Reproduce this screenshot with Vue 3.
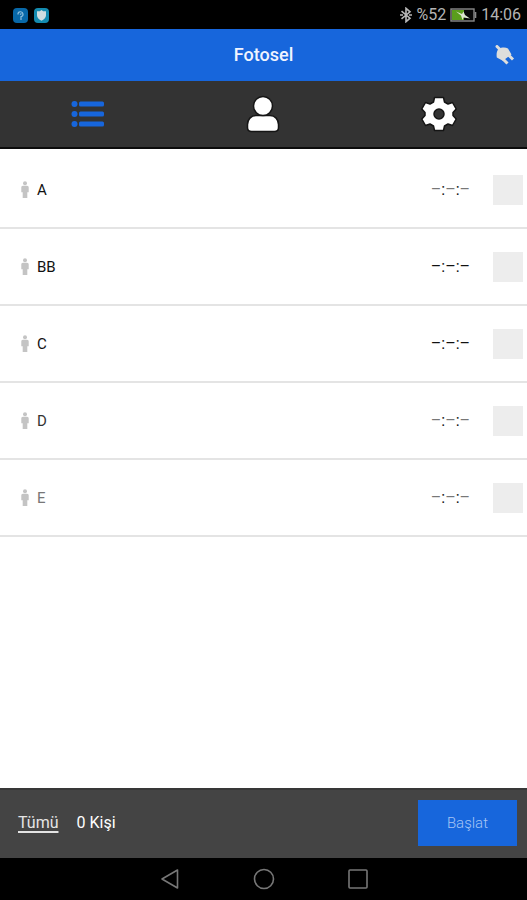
<script setup>
import { ref, computed } from 'vue'

const people = ref([
  { name: 'A', tone: 'dark', clock: 'soft', selected: false },
  { name: 'BB', tone: 'dark', clock: 'dark', selected: false },
  { name: 'C', tone: 'dark', clock: 'dark', selected: false },
  { name: 'D', tone: 'mid', clock: 'soft', selected: false },
  { name: 'E', tone: 'soft', clock: 'soft', selected: false }
])
const count = computed(() => people.value.filter((p) => p.selected).length)
const selectAll = () => people.value.forEach((p) => { p.selected = true })
</script>

<template>
  <div class="screen">
    <div class="status">
      <div class="notes">
        <svg width="15" height="15" viewBox="0 0 15 15" aria-hidden="true">
          <rect width="15" height="15" rx="4" fill="#0868a8" />
          <path d="M5 6.500a2.500 2.500 0 1 1 3 2.200V12M7 6.600l1.500-1" fill="none" stroke="#8fc0de" stroke-width="1.200" />
        </svg>
        <svg width="15" height="15" viewBox="0 0 15 15" aria-hidden="true">
          <rect width="15" height="15" rx="4" fill="#148bb0" />
          <path d="M7.500 2l1.700 1.300H12v4.200c0 2.200-2 3.900-4.500 5.200C5 11.400 3 9.700 3 7.500V3.300h2.800z" fill="#cfdde0" />
        </svg>
      </div>
      <div class="system">
        <svg width="12" height="16" viewBox="0 0 12 16" aria-hidden="true">
          <path d="M1.500 4.200l8.500 7L6 14.700V1.300L10 4.800 1.500 11.800M0 8h3M9 8h3" fill="none" stroke="#b8b8b8" stroke-width="1.600" />
        </svg>
        <span>%52</span>
        <svg width="27" height="14" viewBox="0 0 27 14" aria-hidden="true">
          <rect x="1" y="1" width="23" height="12" fill="#080808" stroke="#8a8a8a" stroke-width="1.400" />
          <rect x="2" y="2" width="12" height="10" fill="#5a9e1c" />
          <path d="M25.500 4v6" stroke="#8a8a8a" stroke-width="1.600" />
          <path d="M6 3.500l6 2.500 1.500-2.500 1.500 3.500 5 3.500-6.500-1-1 2.500-1.500-4.500z" fill="#dce6cf" />
        </svg>
        <span>14:06</span>
      </div>
    </div>

    <header class="bar">
      <h1>Fotosel</h1>
      <button class="plug" aria-label="Bağlantı">
        <svg width="20" height="20" viewBox="0 0 20 20" aria-hidden="true">
          <g stroke="#dededc" stroke-width="3">
            <path d="M2 1.500l4 4" stroke-linecap="round" />
            <path d="M13.500 10l4.500 4.500M8 14l4.500 4.500" />
          </g>
          <path d="M1.800 12.500C1.200 9 1.800 5 4 3.800S10 2 13 3.500l3.500 6-8.700 6.300z" fill="#dededc" />
        </svg>
      </button>
    </header>

    <nav class="tabs">
      <button aria-label="Liste">
        <svg width="34" height="28" viewBox="0 0 34 28" aria-hidden="true">
          <g fill="#1766dc">
            <circle cx="3.500" cy="4" r="3" /><circle cx="3.500" cy="14" r="3" /><circle cx="3.500" cy="24" r="3" />
            <rect x="8" y="1.500" width="25" height="5" rx="1.500" />
            <rect x="8" y="11.500" width="25" height="5" rx="1.500" />
            <rect x="8" y="21.500" width="25" height="5" rx="1.500" />
          </g>
        </svg>
      </button>
      <button aria-label="Kişiler">
        <svg width="34" height="38" viewBox="0 0 34 38" aria-hidden="true">
          <g fill="#fff" stroke="#151515" stroke-width="1.500">
            <path d="M10 20.500h14c5 0 8.500 4 8.500 9v3c0 2.500-1.500 4-4 4h-23c-2.500 0-4-1.500-4-4v-3c0-5 3.500-9 8.500-9z" />
            <circle cx="17" cy="11" r="9.500" />
          </g>
        </svg>
      </button>
      <button aria-label="Ayarlar">
        <svg width="36" height="36" viewBox="0 0 36 36" aria-hidden="true">
          <path fill="#fff" stroke="#151515" stroke-width="1.500" stroke-linejoin="round" d="M13.500 1.500h9l1 4.500 3.500 2 4.500-1.500 3.700 6.500-3.200 3.500v3l3.200 3.500-3.700 6.500-4.500-1.500-3.500 2-1 4.500h-9l-1-4.500-3.500-2-4.500 1.500L.8 23 4 19.500v-3L.8 13l3.700-6.500L9 8l3.500-2z" />
          <circle cx="18" cy="18" r="5" fill="#333" stroke="#151515" stroke-width="1.500" />
        </svg>
      </button>
    </nav>

    <main>
      <ul>
        <li v-for="person in people" :key="person.name">
          <label>
            <svg width="8" height="18" viewBox="0 0 8 18" aria-hidden="true">
              <g fill="#c4c4c4">
                <circle cx="4" cy="2.200" r="2" />
                <path d="M2 4.800h4c1.200 0 1.700.700 1.700 1.700v4.700H6.300V17H1.700v-5.800H.300V6.500c0-1 .500-1.700 1.700-1.700z" />
              </g>
            </svg>
            <span class="name" :class="person.tone">{{ person.name }}</span>
            <span class="time" :class="person.clock">–<i>:</i>–<i>:</i>–</span>
            <input v-model="person.selected" type="checkbox" />
          </label>
        </li>
      </ul>
    </main>

    <footer class="actions">
      <a href="#" @click.prevent="selectAll">Tümü</a>
      <span>{{ count }} Kişi</span>
      <button>Başlat</button>
    </footer>

    <nav class="keys">
      <button aria-label="Geri">
        <svg width="20" height="22" viewBox="0 0 20 22" aria-hidden="true">
          <path d="M17.500 2v18L2 11z" fill="none" stroke="#777" stroke-width="1.600" stroke-linejoin="round" />
        </svg>
      </button>
      <button aria-label="Ana ekran">
        <svg width="22" height="22" viewBox="0 0 22 22" aria-hidden="true">
          <circle cx="11" cy="11" r="9.500" fill="none" stroke="#777" stroke-width="1.600" />
        </svg>
      </button>
      <button aria-label="Son uygulamalar">
        <svg width="20" height="20" viewBox="0 0 20 20" aria-hidden="true">
          <rect x="1" y="1" width="18" height="18" rx="1" fill="none" stroke="#777" stroke-width="1.600" />
        </svg>
      </button>
    </nav>
  </div>
</template>

<style>
body { margin: 0; background: #fff; }
</style>

<style scoped>
.screen {
  display: flex;
  flex-direction: column;
  min-height: 100vh;
  font-family: Roboto, "Liberation Sans", sans-serif;
  font-size: 16px;
  line-height: 20px;
  color: #000;
}
button {
  display: flex;
  align-items: center;
  justify-content: center;
  margin: 0;
  padding: 0;
  border: 0;
  background: none;
  font: inherit;
  cursor: pointer;
}
svg { display: block; flex: none; }
.status {
  display: flex;
  align-items: center;
  justify-content: space-between;
  padding: 5px 6px 4px 13px;
  background: #000;
  color: #b4b4b4;
}
.notes { display: flex; gap: 6px; }
.system { display: flex; align-items: center; gap: 4px; }
.bar {
  display: grid;
  grid-template-columns: 1fr auto 1fr;
  align-items: center;
  padding: 14px 12px;
  background: #1766dc;
}
h1 {
  grid-column: 2;
  margin: 0;
  font-size: 18px;
  line-height: 24px;
  font-weight: 500;
  color: #f0f4ff;
}
.plug { justify-self: end; }
.tabs {
  display: grid;
  grid-template-columns: repeat(3, 1fr);
  background: #333;
  border-bottom: 2px solid #0c0c0c;
}
.tabs button { padding: 14px 0; }
.tabs svg { height: 38px; }
main { flex: 1; padding-top: 3px; }
ul { margin: 0; padding: 0; list-style: none; }
li { border-bottom: 2px solid #e4e4e4; }
label {
  display: flex;
  align-items: center;
  padding: 23px 4px 22px 21px;
}
.name { margin-left: 8px; font-size: 15px; }
.dark { color: #111; }
.mid { color: #333; }
.soft { color: #777; }
.time { margin-left: auto; margin-right: 23px; }
.time i { font-style: normal; color: #111; }
input {
  appearance: none;
  width: 30px;
  height: 30px;
  margin: 0;
  background: #ededed;
}
input:checked { background: #1766dc; }
.actions {
  display: flex;
  align-items: center;
  gap: 18px;
  padding: 10px 10px 12px 18px;
  border-top: 2px solid #383838;
  background: #444;
  color: #fff;
}
.actions a { color: #e4e4e4; text-decoration-thickness: 2px; text-underline-offset: 3px; }
.actions button {
  margin-left: auto;
  padding: 13px 29px;
  background: #1766dc;
  color: #a5c4f5;
  font-size: 15px;
  font-weight: 300;
}
.keys {
  display: flex;
  justify-content: center;
  gap: 73px;
  padding: 10px 0;
  background: #000;
}
</style>
